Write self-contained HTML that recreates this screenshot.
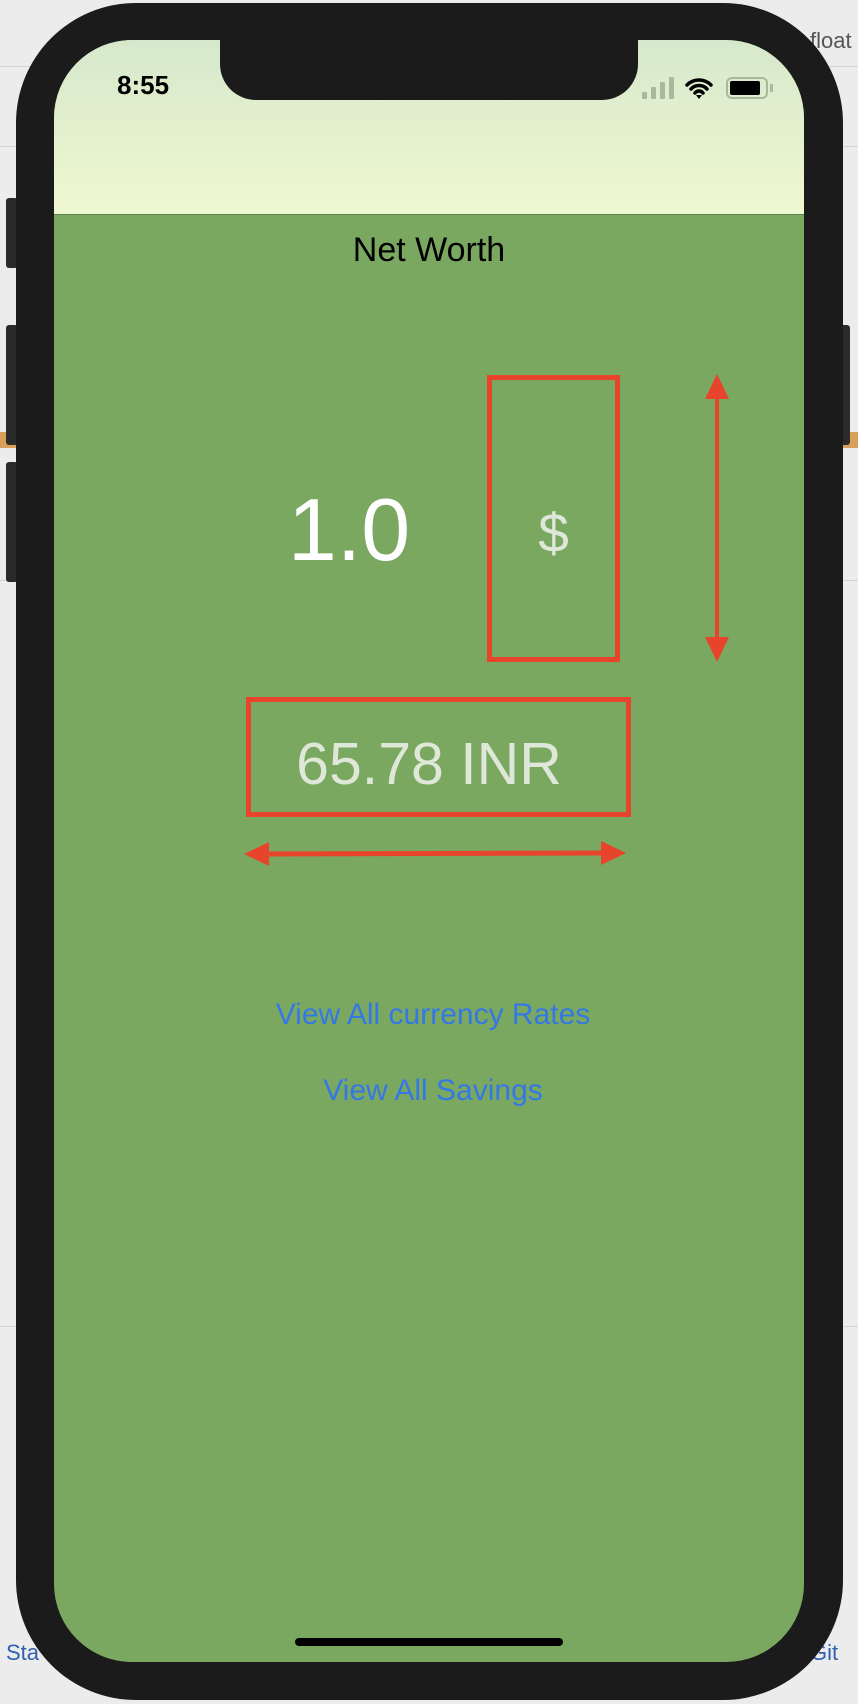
<!DOCTYPE html>
<html><head><style>
*{margin:0;padding:0;box-sizing:border-box}
body{width:858px;height:1704px;background:#ececec;position:relative;overflow:hidden;font-family:"Liberation Sans",sans-serif}
.abs{position:absolute}
.bgline{position:absolute;left:0;width:858px;height:1px;background:#d4d4d4}
</style></head><body>
<div class="bgline" style="top:66px"></div>
<div class="bgline" style="top:146px"></div>
<div class="bgline" style="top:580px"></div>
<div class="bgline" style="top:1326px"></div>
<div class="abs" style="left:810px;top:28px;font-size:22px;color:#555">float</div>
<div class="abs" style="left:0;top:432px;width:858px;height:16px;background:#d9a05a"></div>
<div class="abs" style="left:6px;top:1640px;font-size:22px;color:#3060b0">Sta</div>
<div class="abs" style="left:810px;top:1640px;font-size:22px;color:#3060b0">Git</div>
<div class="abs" style="left:6px;top:198px;width:12px;height:70px;background:#2a2a2a;border-radius:3px"></div>
<div class="abs" style="left:6px;top:325px;width:12px;height:120px;background:#2a2a2a;border-radius:3px"></div>
<div class="abs" style="left:6px;top:462px;width:12px;height:120px;background:#2a2a2a;border-radius:3px"></div>
<div class="abs" style="left:838px;top:325px;width:12px;height:120px;background:#2a2a2a;border-radius:3px"></div>
<div class="abs" style="left:16px;top:3px;width:827px;height:1697px;background:#1b1b1b;border-radius:120px"></div>
<div class="abs" style="left:54px;top:40px;width:750px;height:1622px;background:#7ba860;border-radius:78px;overflow:hidden">
  <div class="abs" style="left:0;top:0;width:750px;height:175px;background:linear-gradient(#d6e8cc,#eff8d0);border-bottom:1px solid #5e7d4a"></div>
  <div class="abs" style="left:166px;top:-2px;width:418px;height:62px;background:#1b1b1b;border-radius:0 0 36px 36px"></div>
  <div class="abs" style="left:63px;top:30px;font-size:26px;font-weight:bold;color:#000">8:55</div>
  <div class="abs" style="left:588px;top:52px;width:5px;height:7px;background:#a9b89d;border-radius:1px"></div>
  <div class="abs" style="left:597px;top:47px;width:5px;height:12px;background:#a9b89d;border-radius:1px"></div>
  <div class="abs" style="left:606px;top:42px;width:5px;height:17px;background:#a9b89d;border-radius:1px"></div>
  <div class="abs" style="left:615px;top:37px;width:5px;height:22px;background:#a9b89d;border-radius:1px"></div>
  <svg class="abs" style="left:630px;top:36px" width="30" height="24" viewBox="0 0 30 24"><path d="M3 9a17 17 0 0 1 24 0M7 13a11 11 0 0 1 16 0M11 17a5 5 0 0 1 8 0" stroke="#000" stroke-width="3.5" fill="none" stroke-linecap="round"/><path d="M12 19l3 4 3-4z" fill="#000"/></svg>
  <div class="abs" style="left:672px;top:37px;width:42px;height:22px;border:2px solid #a9b89d;border-radius:6px"></div>
  <div class="abs" style="left:676px;top:41px;width:30px;height:14px;background:#000;border-radius:2px"></div>
  <div class="abs" style="left:716px;top:44px;width:3px;height:8px;background:#a9b89d;border-radius:1px"></div>
  <div class="abs" style="left:0;top:191px;width:750px;text-align:center;font-size:34px;color:#000">Net Worth</div>
  <div class="abs" style="left:185px;top:446px;width:220px;text-align:center;font-size:88px;color:#fff;line-height:1">1.0</div>
  <div class="abs" style="left:433px;top:335px;width:133px;height:287px;border:5px solid #e8432b"></div>
  <div class="abs" style="left:433px;top:466px;width:133px;text-align:center;font-size:55px;color:#dfe8d8;line-height:1">$</div>
  <div class="abs" style="left:192px;top:657px;width:385px;height:120px;border:5px solid #e8432b"></div>
  <div class="abs" style="left:205px;top:695px;width:340px;text-align:center;font-size:59px;color:#dfe8d8;line-height:1">65.78 INR</div>
  <svg class="abs" style="left:0;top:0" width="750" height="900">
    <line x1="663" y1="350" x2="663" y2="600" stroke="#e8432b" stroke-width="4"/>
    <path d="M663 334l-12 25h24z M663 622l-12-25h24z" fill="#e8432b"/>
    <line x1="210" y1="814" x2="552" y2="813" stroke="#e8432b" stroke-width="5"/>
    <path d="M190 814l25-12v24z M572 813l-25-12v24z" fill="#e8432b"/>
  </svg>
  <div class="abs" style="left:0;top:958px;width:758px;text-align:center;font-size:30px;color:#3478e6">View All currency Rates</div>
  <div class="abs" style="left:0;top:1034px;width:758px;text-align:center;font-size:30px;color:#3478e6">View All Savings</div>
  <div class="abs" style="left:241px;top:1598px;width:268px;height:8px;background:#000;border-radius:4px"></div>
</div>
</body></html>
